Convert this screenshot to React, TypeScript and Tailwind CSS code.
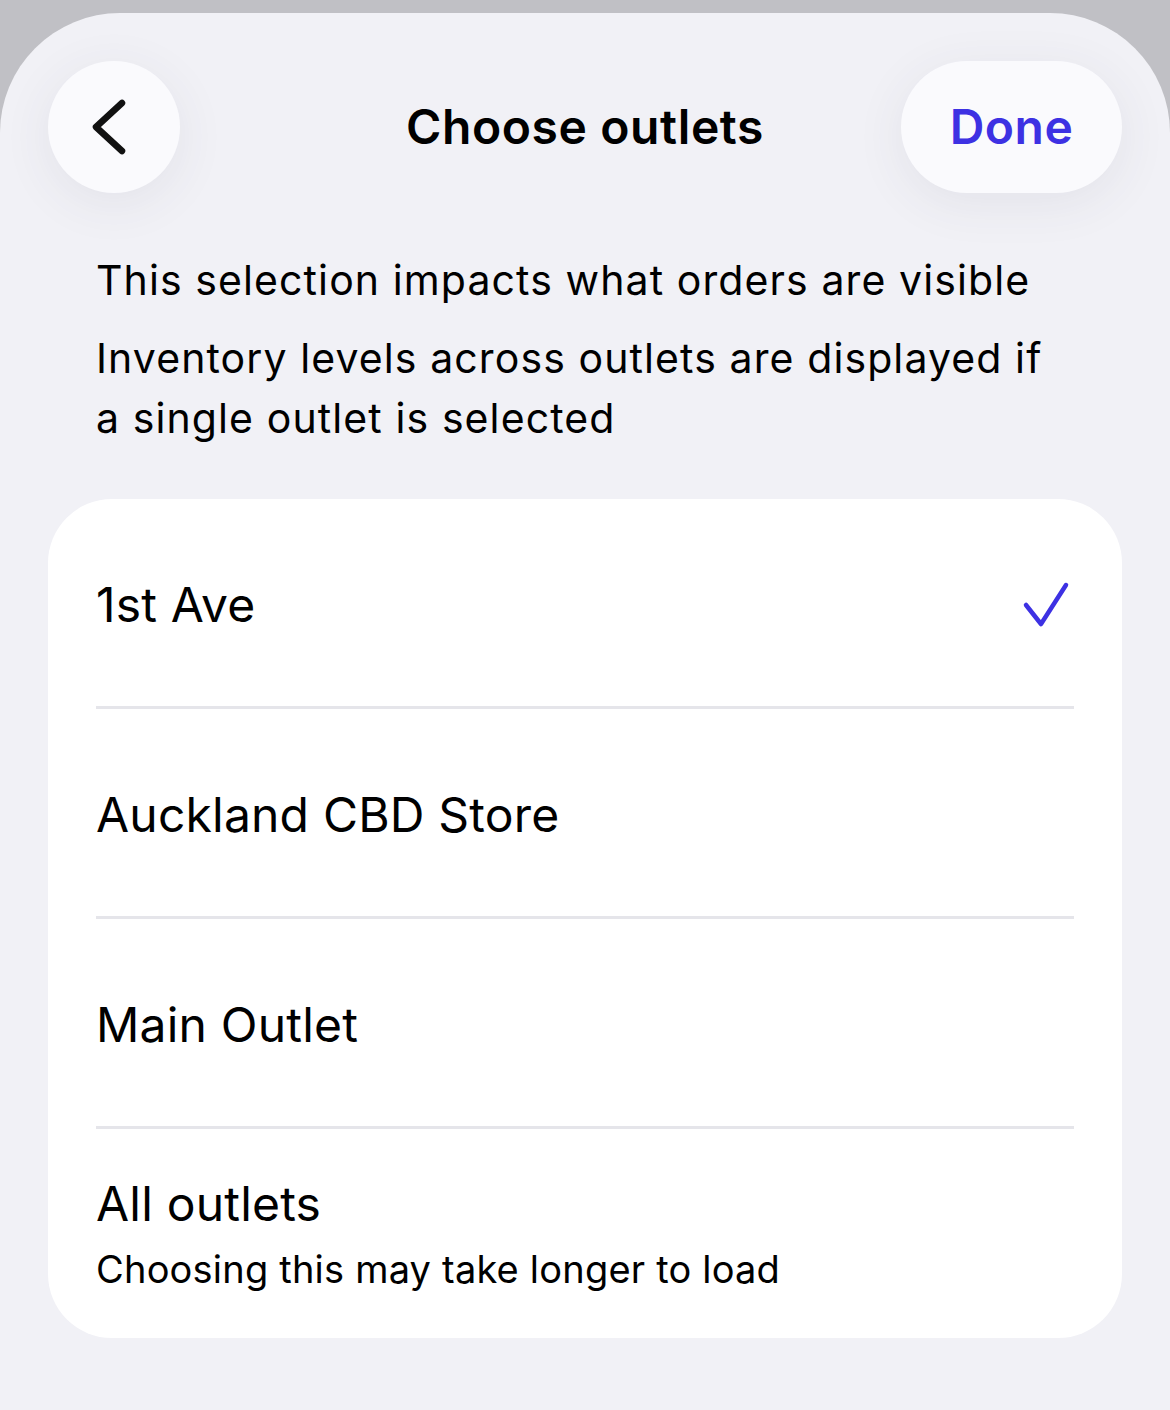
const outlets = ["1st Ave", "Auckland CBD Store", "Main Outlet"];

function BackChevron() {
	return (
		<svg width="40" height="60" viewBox="0 0 40 60" fill="none">
			<polyline points="32,6 6,30 32,54" stroke="#111" strokeWidth="6.5" strokeLinecap="round" strokeLinejoin="round" />
		</svg>
	);
}

function Check() {
	return (
		<svg width="50" height="50" viewBox="0 0 50 50" fill="none">
			<polyline points="5,25 20,44 45,5" stroke="#3d31e3" strokeWidth="4.5" strokeLinecap="round" strokeLinejoin="round" />
		</svg>
	);
}

export default function App() {
	const selected = "1st Ave";

	return (
		<div className="w-[1170px] h-[1410px] bg-[#c0c0c5] pt-[13px] font-['Inter','Noto_Sans',sans-serif] text-black">
			<div className="h-full bg-[#f1f1f6] rounded-t-[120px] px-12 pt-12">
				{/* header */}
				<div className="relative flex items-center justify-between h-[132px]">
					<button className="w-[132px] h-[132px] rounded-full bg-[#fafafd] flex items-center justify-center shadow-[0_10px_50px_rgba(60,60,90,0.08)]">
						<span className="-ml-2 flex"><BackChevron /></span>
					</button>
					<h1 className="absolute left-1/2 -translate-x-1/2 text-[48px] font-semibold tracking-[0.6px]">Choose outlets</h1>
					<button className="h-[132px] w-[221px] rounded-full bg-[#fafafd] text-[48px] font-semibold text-[#3d31e3] tracking-[0.5px] shadow-[0_10px_50px_rgba(60,60,90,0.08)]">
						Done
					</button>
				</div>

				{/* description */}
				<div className="px-12 mt-[57px] text-[41px] leading-[60px] tracking-[1.1px] flex flex-col gap-[18px]">
					<p>This selection impacts what orders are visible</p>
					<p>Inventory levels across outlets are displayed if a single outlet is selected</p>
				</div>

				{/* outlet list */}
				<div className="mt-[51px] bg-white rounded-[64px] px-12">
					{outlets.map((name) => (
						<div key={name} className="h-[210px] border-b-[3px] border-[#e5e5ea] flex items-center justify-between">
							<span className="text-[48px] mt-1 tracking-[0.2px]">{name}</span>
							{selected === name && <span className="flex mt-1 mr-[3px]"><Check /></span>}
						</div>
					))}
					<div className="h-[209px] flex flex-col justify-center gap-[10px]">
						<span className="text-[48px] leading-[60px] tracking-[0.2px]">All outlets</span>
						<span className="text-[38px] leading-[50px] tracking-[0.2px]">Choosing this may take longer to load</span>
					</div>
				</div>
			</div>
		</div>
	);
}
